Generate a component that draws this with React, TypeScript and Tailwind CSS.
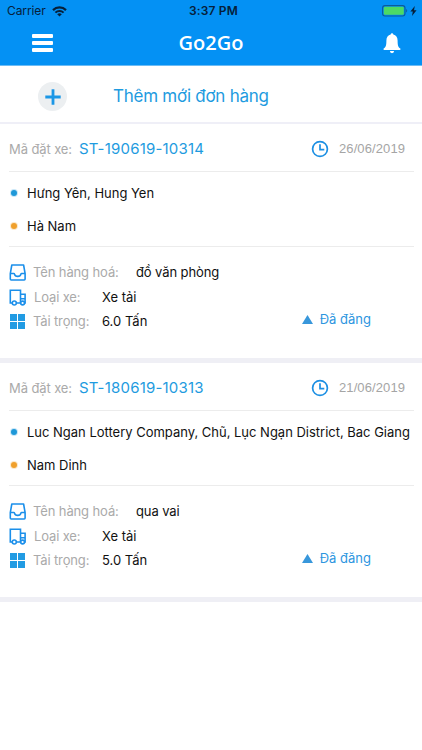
import type { ReactNode } from "react";

type Order = {
  code: string;
  date: string;
  from: string;
  to: string;
  goods: string;
  vehicle: string;
  weight: string;
};

const orders: Order[] = [
  {
    code: "ST-190619-10314",
    date: "26/06/2019",
    from: "Hưng Yên, Hung Yen",
    to: "Hà Nam",
    goods: "đồ văn phòng",
    vehicle: "Xe tải",
    weight: "6.0 Tấn",
  },
  {
    code: "ST-180619-10313",
    date: "21/06/2019",
    from: "Luc Ngan Lottery Company, Chũ, Lục Ngạn District, Bac Giang",
    to: "Nam Dinh",
    goods: "qua vai",
    vehicle: "Xe tải",
    weight: "5.0 Tấn",
  },
];

function WifiIcon() {
  return (
    <svg className="ml-[6px] h-[11px] w-[15px]" viewBox="0 0 15 11" fill="none" stroke="#06203a">
      <path d="M1 4.1a9.3 9.3 0 0 1 13 0" strokeWidth="2.2" />
      <path d="M3.4 6.6a5.9 5.9 0 0 1 8.2 0" strokeWidth="2" />
      <path d="M7.5 10.6 5.2 8.3a3.3 3.3 0 0 1 4.6 0z" fill="#06203a" stroke="none" />
    </svg>
  );
}

function Battery() {
  return (
    <div className="flex items-center">
      <svg className="h-[12px] w-[26px]" viewBox="0 0 26 12">
        <rect x="0.6" y="0.6" width="22.4" height="10.4" rx="2.4" fill="none" stroke="#0b5a9c" strokeWidth="1.1" />
        <rect x="1.8" y="1.8" width="20" height="8" rx="1.2" fill="#4cd964" />
        <path d="M24.2 4.1c1.3.5 1.3 3 0 3.5z" fill="#0b5a9c" />
      </svg>
      <svg className="ml-[2px] h-[10px] w-[7px]" viewBox="0 0 7 10">
        <path d="M4.8 0 .4 5.5h2.4L2 10l4.6-5.8H4z" fill="#06203a" />
      </svg>
    </div>
  );
}

function BellIcon() {
  return (
    <svg className="h-[21px] w-[18px]" viewBox="0 0 18 21" fill="#fff">
      <path d="M9 .2c.8 0 1.3.6 1.3 1.4 2.7.6 4.3 2.8 4.3 5.8 0 5.2.7 6.6 2.7 8.2.5.5.2 1.5-.6 1.5H1.3c-.8 0-1.1-1-.6-1.5 2-1.6 2.7-3 2.7-8.2 0-3 1.6-5.2 4.3-5.8C7.7.8 8.2.2 9 .2z" />
      <path d="M6.9 18.1h4.2a2.1 2.1 0 0 1-4.2 0z" />
    </svg>
  );
}

function ClockIcon() {
  return (
    <svg className="h-[18px] w-[18px]" viewBox="0 0 18 18" fill="none" stroke="#1c8fe3" strokeWidth="1.7">
      <circle cx="9" cy="9" r="7.4" />
      <path d="M9 4.3v5.3h4.3" />
    </svg>
  );
}

function TrayIcon() {
  return (
    <svg className="h-[17px] w-[17px]" viewBox="0 0 17 17" fill="none" stroke="#1b8fea" strokeWidth="1.6" strokeLinejoin="round">
      <path d="M2.8 1h11.8l1.5 8.7v5.4a.9.9 0 0 1-.9.9H2.2a.9.9 0 0 1-.9-.9V9.7z" />
      <path d="M1.3 9.5h3.5c.4 0 .6.3.7.7.3 1.5 1.2 2.2 3.2 2.2s2.9-.7 3.2-2.2c.1-.4.3-.7.7-.7h3.5" />
    </svg>
  );
}

function TruckIcon() {
  return (
    <svg className="h-[17px] w-[17px]" viewBox="0 0 17 17" fill="none" stroke="#1b8fea" strokeWidth="1.6">
      <path d="M3 14H1.3V1.2h10.2V14H7.5M11.5 5.2h4.600V14H11.5M11.5 9.7h4.600" />
      <circle cx="5.3" cy="14" r="2" fill="#fff" />
      <circle cx="13.6" cy="14" r="1.9" fill="#fff" />
    </svg>
  );
}

function GridIcon() {
  return (
    <div className="mb-px ml-px grid h-[15px] w-[15px] grid-cols-2 gap-px">
      <span className="bg-[#219be3]" />
      <span className="bg-[#219be3]" />
      <span className="bg-[#219be3]" />
      <span className="bg-[#219be3]" />
    </div>
  );
}

function Place({ tone, children }: { tone: string; children: ReactNode }) {
  return (
    <div className="flex h-[33px] items-center whitespace-nowrap">
      <span className={`mb-px ml-[2px] mr-[10px] h-[6px] w-[6px] shrink-0 rounded-full ring-1 ${tone}`} />
      <span className="tracking-[-0.01px]">{children}</span>
    </div>
  );
}

function OrderCard({ order }: { order: Order }) {
  return (
    <section className="h-[239px] border-b-[5px] border-[#efeff5] bg-white pl-[9px] pr-2 text-[13px] text-[#111]">
      <div className="flex h-12 items-center border-b border-[#ececec] pt-[3px]">
        <span className="w-[70px] pt-px tracking-[-0.1px] text-[#aaa]">Mã đặt xe:</span>
        <span className="pt-px text-[15px] tracking-[0.2px] text-[#1e9be0]">{order.code}</span>
        <span className="ml-auto mr-[10px]">
          <ClockIcon />
        </span>
        <span className="mr-2 w-[67px] font-['Liberation_Sans'] tracking-[0.1px] text-[#a5a5a5]">{order.date}</span>
      </div>
      <div className="h-[75px] border-b border-[#ececec] pt-[5px]">
        <Place tone="bg-[#1e98d8] ring-[#c9e7f8]">{order.from}</Place>
        <Place tone="bg-[#f0a02c] ring-[#fce8c8]">{order.to}</Place>
      </div>
      <div className="flex pt-[12px]">
        <div>
          <div className="flex h-[26px] items-center">
            <TrayIcon />
            <span className="ml-[7px] w-[103px] pt-px tracking-[-0.12px] text-[#aaa]">Tên hàng hoá:</span>
            <span className="pt-px tracking-[-0.1px]">{order.goods}</span>
          </div>
          <div className="flex h-[25px] items-center">
            <TruckIcon />
            <span className="ml-2 w-[68px] pt-px tracking-[-0.14px] text-[#aaa]">Loại xe:</span>
            <span className="pt-px">{order.vehicle}</span>
          </div>
          <div className="flex h-6 items-center">
            <GridIcon />
            <span className="ml-2 w-[69px] tracking-[-0.14px] text-[#aaa]">Tải trọng:</span>
            <span>{order.weight}</span>
          </div>
        </div>
        <div className="ml-auto mr-[43px] flex items-center self-end pb-[5px] text-[#2d96df]">
          <svg className="mr-[7px] h-[9px] w-[11px]" viewBox="0 0 11 9">
            <path d="M5.5 0 11 9H0z" fill="#3897db" />
          </svg>
          <span>Đã đăng</span>
        </div>
      </div>
    </section>
  );
}

export default function App() {
  return (
    <div className="h-[750px] w-[422px] overflow-hidden bg-white font-['Inter','Liberation_Sans',sans-serif]">
      <header className="h-[66px] border-b border-[#6cbcf5] bg-[#0491f4]">
        <div className="grid h-[22px] grid-cols-3 items-center pl-[7px] pr-[5px] text-[#06203a]">
          <div className="flex items-center text-[12px] tracking-[-0.1px]">
            <span>Carrier</span>
            <WifiIcon />
          </div>
          <div className="pl-[3px] text-center text-[12px] font-semibold tracking-[0.15px]">3:37 PM</div>
          <div className="flex justify-end">
            <Battery />
          </div>
        </div>
        <div className="grid h-[43px] grid-cols-3 items-center pl-8 pr-[21px]">
          <div className="mt-[-1px] flex w-[21px] flex-col gap-[3px]">
            <span className="h-1 rounded-[1px] bg-white" />
            <span className="h-1 rounded-[1px] bg-white" />
            <span className="h-1 rounded-[1px] bg-white" />
          </div>
          <h1 className="mt-[-1px] pr-[11px] text-center font-['Open_Sans'] text-[20px] font-semibold text-white">
            Go2Go
          </h1>
          <div className="flex justify-end">
            <BellIcon />
          </div>
        </div>
      </header>

      <div className="flex h-[58px] items-center border-b-2 border-[#efeff7] pt-[5px]">
        <div className="ml-[38px] mr-[46px] flex h-[29px] w-[29px] items-center justify-center rounded-full bg-[#eceff1]">
          <svg className="h-4 w-4" viewBox="0 0 16 16" stroke="#1b97e6" strokeWidth="2.8">
            <path d="M8 .3v15.4M.3 8h15.4" />
          </svg>
        </div>
        <span className="pt-px text-[17px] tracking-[-0.25px] text-[#1e9be0]">Thêm mới đơn hàng</span>
      </div>

      {orders.map((order) => (
        <OrderCard key={order.code} order={order} />
      ))}
    </div>
  );
}
